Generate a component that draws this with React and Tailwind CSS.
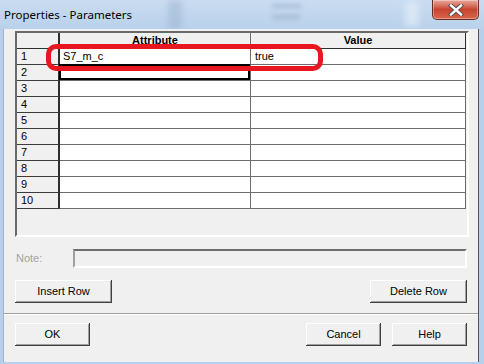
import React from 'react';

const rows = [
    { n: 1, attr: 'S7_m_c', val: 'true' },
    { n: 2, attr: '', val: '' },
    { n: 3, attr: '', val: '' },
    { n: 4, attr: '', val: '' },
    { n: 5, attr: '', val: '' },
    { n: 6, attr: '', val: '' },
    { n: 7, attr: '', val: '' },
    { n: 8, attr: '', val: '' },
    { n: 9, attr: '', val: '' },
    { n: 10, attr: '', val: '' },
];

// classic 3D push button
const Button = ({ children, className = '' }) => (
    <button
        className={`h-[23px] bg-[#f0f0f0] text-[11px] text-black shadow-[inset_-1px_-1px_0_#404040,inset_1px_1px_0_#ffffff,inset_-2px_-2px_0_#a0a0a0] ${className}`}
    >
        {children}
    </button>
);

const CloseButton = () => (
    <div className="absolute right-[5px] top-0 w-[47px] h-[20px] rounded-b-[5px] border border-t-0 border-[#6b2c24] bg-gradient-to-b from-[#e9a99e] via-[#c8432f] to-[#d9664b] shadow-[inset_0_0_0_1px_rgba(255,255,255,0.35)] flex items-center justify-center">
        <svg width="16" height="12" viewBox="0 0 16 12">
            <path d="M3 1.5 L13 10.5 M13 1.5 L3 10.5" stroke="#4a4a4a" strokeWidth="4.2" strokeLinecap="square" />
            <path d="M3 1.5 L13 10.5 M13 1.5 L3 10.5" stroke="#ffffff" strokeWidth="2.4" strokeLinecap="square" />
        </svg>
    </div>
);

export default function App() {
    return (
        <div
            className="w-[484px] h-[364px] bg-[#b6cfea] overflow-hidden flex flex-col"
            style={{ fontFamily: '"Liberation Sans", Arial, sans-serif' }}
        >
            {/* Title bar */}
            <div className="relative h-[29px] shrink-0 bg-gradient-to-b from-[#cadcf1] to-[#b9d1eb] flex items-center pl-[4px] overflow-hidden">
                <div className="absolute left-[168px] top-0 w-[14px] h-[29px] bg-[#8ea8c6] opacity-40 blur-[3px]" />
                <div className="absolute left-[272px] top-[4px] w-[30px] h-[4px] bg-[#7f97b3] opacity-40 blur-[2px]" />
                <div className="absolute left-[272px] top-[14px] w-[28px] h-[6px] bg-[#7f97b3] opacity-30 blur-[2px]" />
                <div className="absolute left-[405px] top-[2px] w-[14px] h-[24px] bg-[#e8f1fa] opacity-60 blur-[3px]" />
                <span className="relative text-[11.5px] text-black" style={{ fontFamily: '"Noto Sans", "Open Sans", sans-serif' }}>
                    Properties - Parameters
                </span>
                <CloseButton />
            </div>

            {/* Client area */}
            <div className="ml-[3px] w-[476px] h-[333px] bg-[#f0f0f0] border-l border-l-[#9fb3c9] border-r border-r-[#555555] flex flex-col">
                {/* Grid */}
                <div className="ml-[11px] mt-[2px] w-[454px] h-[206px] border-2 border-t-[#696969] border-l-[#696969] border-r-white border-b-white bg-[#f0f0f0]">
                    <div className="grid grid-cols-[43px_191px_215px] text-[11px] text-black">
                        <div className="h-[16px] border-r-2 border-r-[#2e2e2e] border-b border-b-[#2e2e2e]" />
                        <div className="h-[16px] border-r border-r-[#6d6d6d] border-b border-b-[#2e2e2e] font-bold text-center leading-[15px]">
                            Attribute
                        </div>
                        <div className="h-[16px] border-r border-r-[#2e2e2e] border-b border-b-[#2e2e2e] font-bold text-center leading-[15px]">
                            Value
                        </div>

                        {rows.map((r) => (
                            <React.Fragment key={r.n}>
                                <div className="h-[16px] border-r-2 border-r-[#2e2e2e] border-b border-b-[#3c3c3c] pl-[4px] leading-[15px]">
                                    {r.n}
                                </div>
                                <div className="relative h-[16px] bg-white border-r border-b border-[#6d6d6d] pl-[3px] leading-[15px]">
                                    {r.attr}
                                    {r.n === 2 && (
                                        <div className="absolute top-[-1px] left-[-1px] right-0 bottom-0 border-2 border-black" />
                                    )}
                                </div>
                                <div className="h-[16px] bg-white border-r border-b border-[#6d6d6d] pl-[4px] leading-[15px]">
                                    {r.val}
                                </div>
                            </React.Fragment>
                        ))}
                    </div>
                </div>

                {/* Note */}
                <div className="mt-[12px] flex items-center justify-between pl-[12px] pr-[11px]">
                    <span className="text-[11px] text-[#a3a3a3]">Note:</span>
                    <div className="w-[394px] h-[19px] border-2 border-t-[#6d6d6d] border-l-[#a0a0a0] border-r-white border-b-white bg-[#f0f0f0]" />
                </div>

                {/* Row buttons */}
                <div className="mt-[12px] flex justify-between px-[11px]">
                    <Button className="w-[97px]">Insert Row</Button>
                    <Button className="w-[97px]">Delete Row</Button>
                </div>

                <div className="mt-[10px] h-[2px] border-t border-t-[#a0a0a0] border-b border-b-white" />

                {/* Dialog buttons */}
                <div className="mt-[8px] flex justify-between px-[11px]">
                    <Button className="w-[75px]">OK</Button>
                    <div className="flex gap-[11px]">
                        <Button className="w-[75px]">Cancel</Button>
                        <Button className="w-[75px]">Help</Button>
                    </div>
                </div>
            </div>

            {/* Red annotation */}
            <div className="pointer-events-none absolute left-[46px] top-[44px] w-[277px] h-[27px] rounded-[10px] border-[5px] border-[#e8161f]" />
        </div>
    );
}
